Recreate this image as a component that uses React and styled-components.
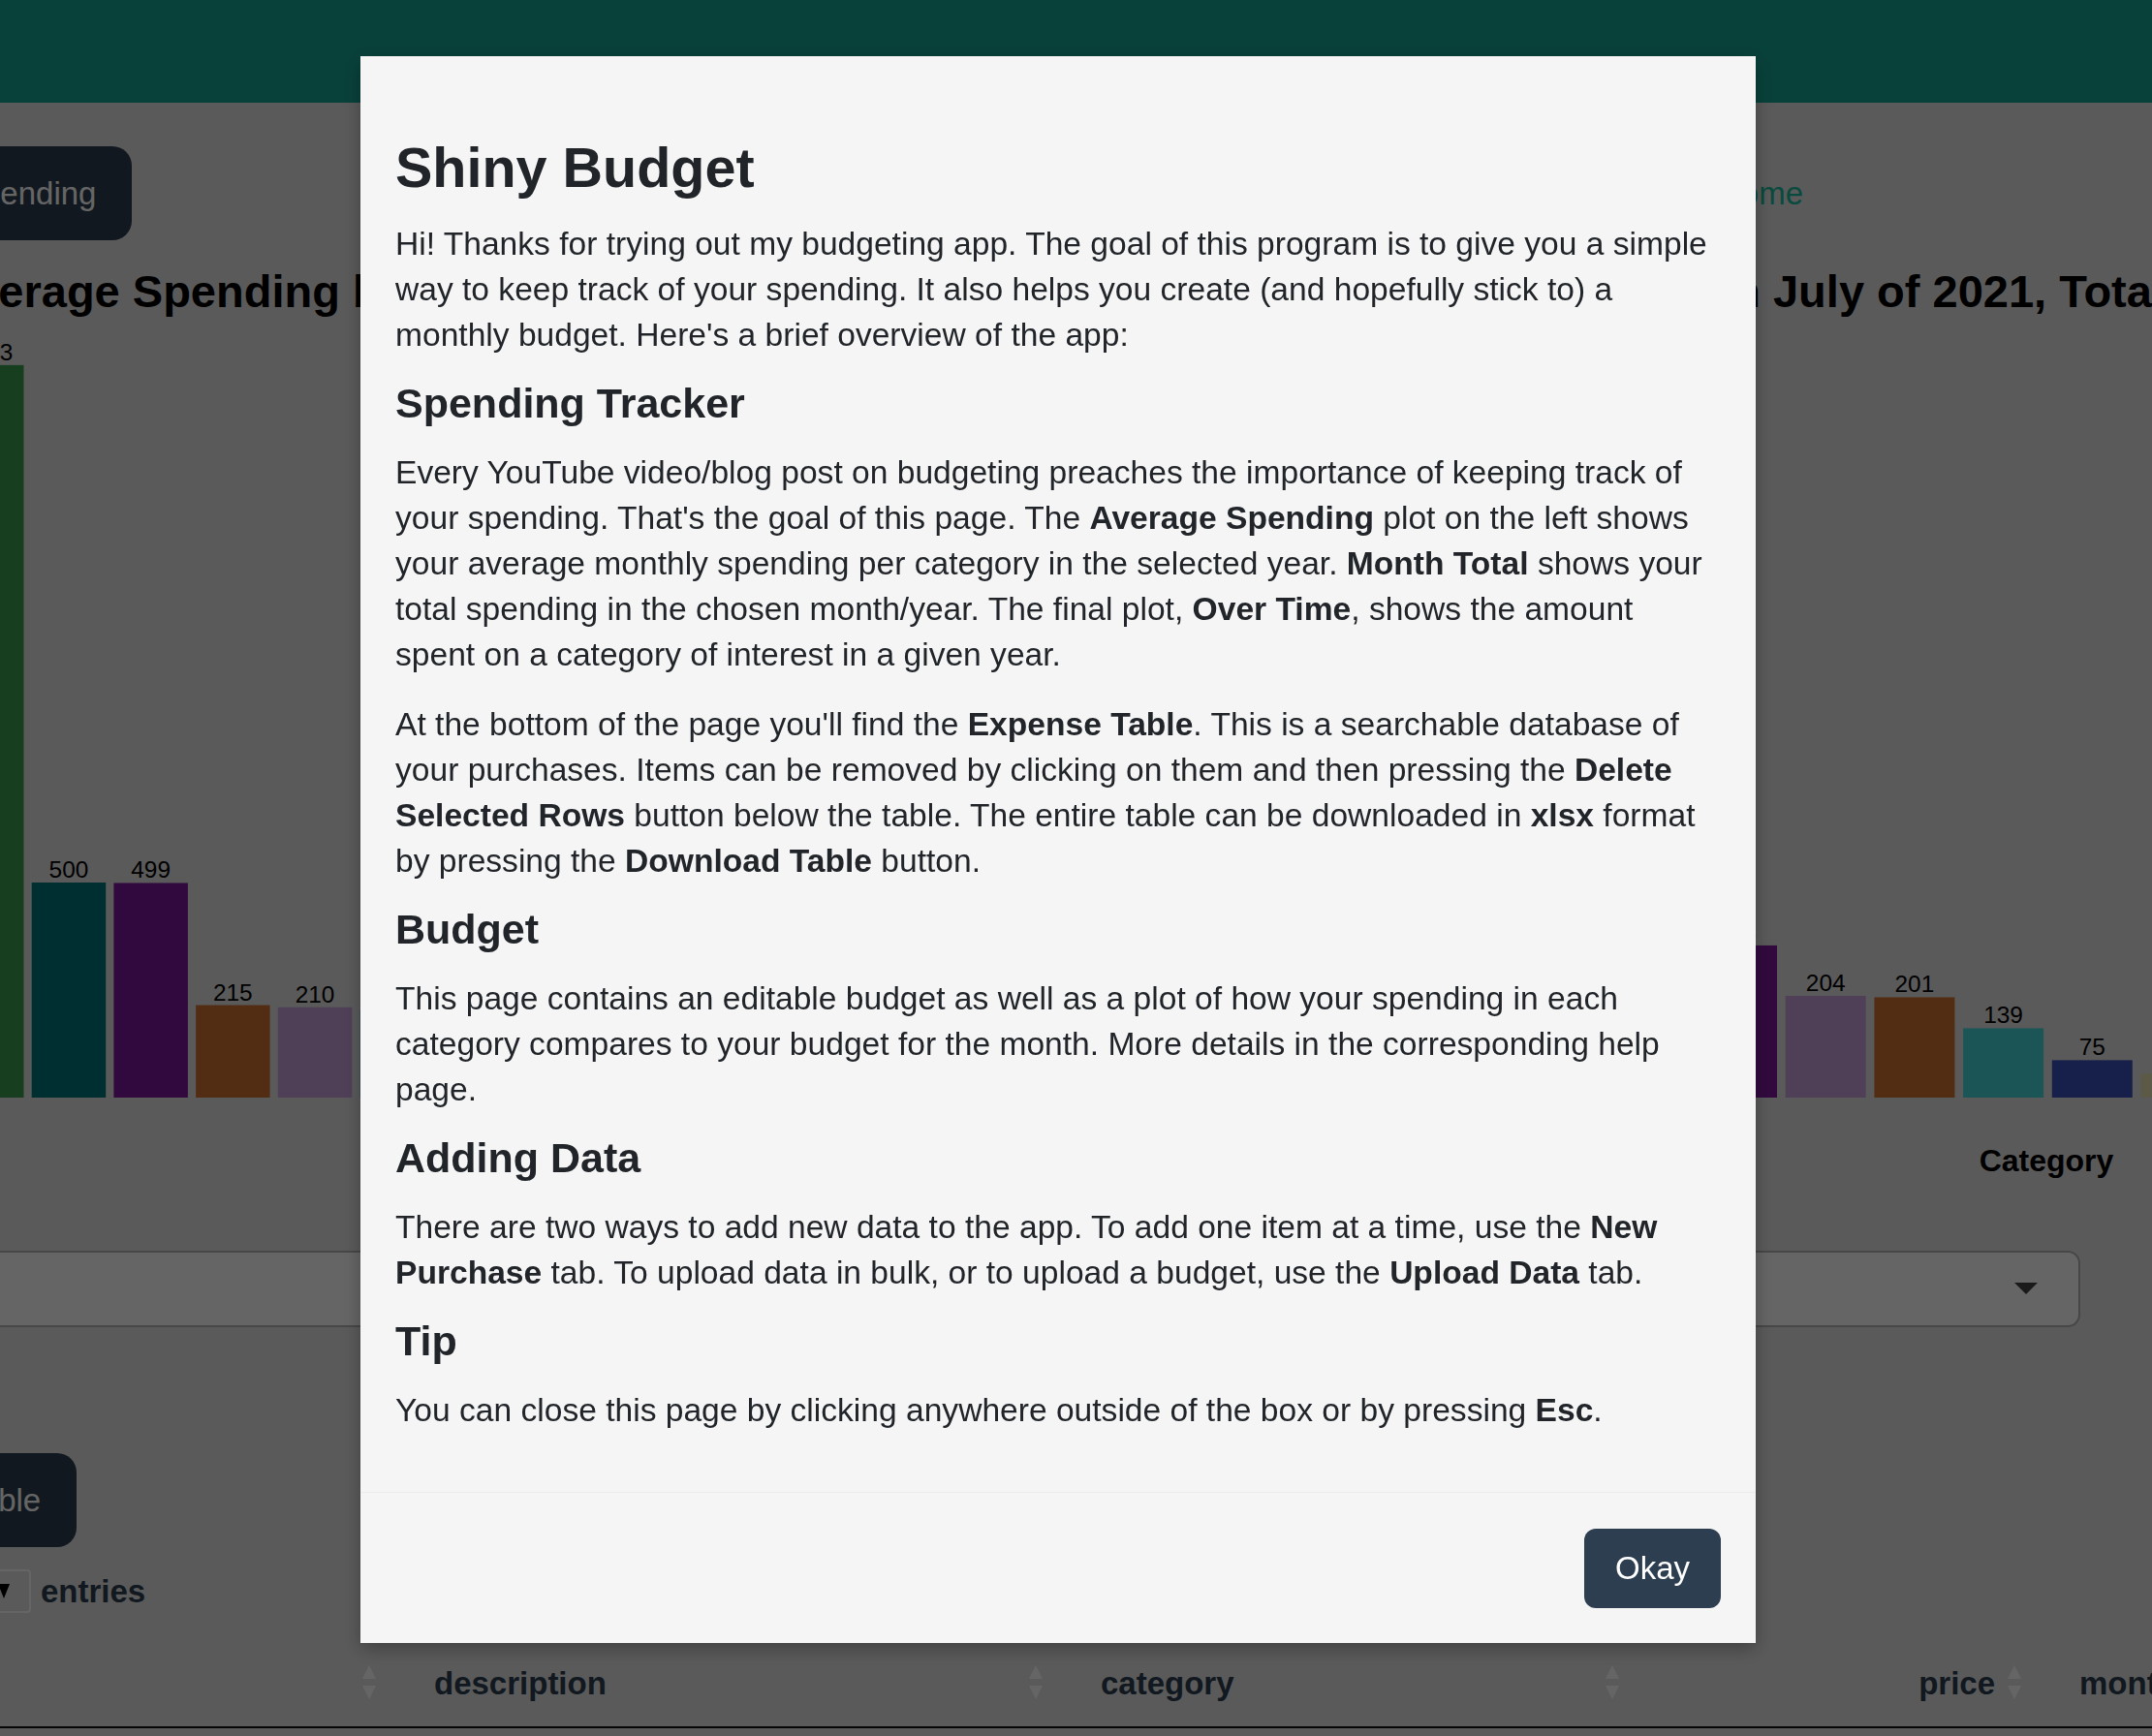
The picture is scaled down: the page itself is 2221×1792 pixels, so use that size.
import React from 'react';
import styled, { createGlobalStyle } from 'styled-components';

const GlobalStyle = createGlobalStyle`
  html,
  body {
    margin: 0;
    padding: 0;
    overflow: hidden;
    background: #e3e3e3;
  }

  body {
    font-family: "Liberation Sans", Arial, sans-serif;
  }
`;

const Page = styled.div`
  width: 3000px;
  margin-left: -240px;
  color: #2c3e50;
  font-size: 33px;
  line-height: 1.5;
`;

const Navbar = styled.header`
  height: 106px;
  background-color: #16a493;
`;

const Tabs = styled.nav`
  display: flex;
  align-items: center;
  justify-content: space-between;
  width: 1975px;
  margin-top: 45px;
  margin-left: 163px;
`;

const Tab = styled.a`
  display: block;
  padding: 25px 37px;
  border-radius: 20px;
  line-height: 47px;
  white-space: nowrap;
  color: ${(p) => (p.$active ? '#fff' : '#18bc9c')};
  background-color: ${(p) => (p.$active ? '#2c3e50' : 'transparent')};
`;

const PlotRow = styled.section`
  display: grid;
  grid-template-columns: 1608px 1128px;
  padding-left: 180px;
`;

const PlotColumn = styled.div`
  display: flex;
  flex-direction: column;
`;

const PlotTitle = styled.h2`
  margin: 25px 0 0;
  font-size: 47px;
  line-height: 1.2;
  font-weight: 700;
  color: #000;
  white-space: nowrap;
`;

const ChartSvg = styled.svg`
  display: block;
  font-family: "Liberation Sans", Arial, sans-serif;
`;

const AxisTitle = styled.div`
  text-align: center;
  font-size: 32px;
  line-height: 1.2;
  font-weight: 700;
  color: #000;
`;

const SelectRow = styled.section`
  display: grid;
  grid-template-columns: 1608px 1128px;
  padding-left: 180px;
  margin-top: 73px;
`;

const SelectBox = styled.div`
  box-sizing: border-box;
  display: flex;
  align-items: center;
  justify-content: flex-end;
  width: ${(p) => p.$width}px;
  height: 79px;
  padding-right: 42px;
  border: 2px solid #b3b3b3;
  border-radius: 13px;
  background-color: #fff;
`;

const Caret = styled.span`
  width: 0;
  height: 0;
  border-left: 12px solid transparent;
  border-right: 12px solid transparent;
  border-top: 12px solid #424242;
`;

const ActionRow = styled.div`
  display: flex;
  margin-top: 130px;
  padding-left: 11px;
`;

const PillButton = styled.button`
  padding: 25px 37px;
  border: 0;
  border-radius: 20px;
  font-family: inherit;
  font-size: 33px;
  line-height: 47px;
  color: #fff;
  background-color: #2c3e50;
  white-space: nowrap;
`;

const EntriesRow = styled.div`
  display: flex;
  align-items: center;
  gap: 10px;
  margin-top: 23px;
  padding-left: 84px;
  font-size: 33px;
  line-height: 45px;
  font-weight: 700;
`;

const LengthSelect = styled.div`
  box-sizing: border-box;
  display: flex;
  align-items: center;
  justify-content: space-between;
  width: 90px;
  height: 45px;
  padding: 0 20px 0 12px;
  border: 2px solid #fff;
  border-radius: 4px;
  font-weight: 400;
  font-size: 26px;
`;

const SmallCaret = styled.span`
  width: 0;
  height: 0;
  border-left: 6px solid transparent;
  border-right: 6px solid transparent;
  border-top: 15px solid #000;
`;

const TableHead = styled.div`
  display: grid;
  grid-template-columns: 487px 688px 595px 415px 375px;
  margin-top: 28px;
  padding-left: 180px;
`;

const HeadCell = styled.div`
  display: flex;
  align-items: center;
  justify-content: ${(p) => (p.$right ? 'flex-end' : 'flex-start')};
  gap: 13px;
  padding: 21px 39px 21px 21px;
  font-size: 33px;
  line-height: 47px;
  font-weight: 700;
  border-bottom: 2px solid #111;
  white-space: nowrap;
`;

const SortIcon = styled.svg`
  flex: none;
  margin-left: ${(p) => (p.$right ? '0' : 'auto')};
`;

const Backdrop = styled.div`
  position: fixed;
  inset: 0;
  background-color: rgba(0, 0, 0, 0.604);
  z-index: 10;
`;

const Modal = styled.div`
  position: fixed;
  top: 58px;
  left: 372px;
  width: 1440px;
  background-color: #f5f5f5;
  box-shadow: 0 6px 18px rgba(0, 0, 0, 0.3);
  color: #212529;
  z-index: 20;
`;

const ModalBody = styled.div`
  padding: 81px 36px 36px;
  font-size: 33.6px;
  line-height: 47px;
`;

const ModalTitle = styled.h2`
  margin: 0 0 20px;
  font-size: 57.5px;
  line-height: 1.2;
  font-weight: 700;
`;

const Section = styled.h3`
  margin: 0 0 26px;
  font-size: 43px;
  line-height: 44px;
  font-weight: 700;
`;

const Text = styled.p`
  margin: 0 0 25px;
`;

const ModalFooter = styled.footer`
  display: flex;
  justify-content: flex-end;
  padding: 37px 36px 36px;
  border-top: 1px solid #ececec;
`;

const OkayButton = styled.button`
  padding: 17px 32px 18px;
  border: 0;
  border-radius: 12px;
  font-family: inherit;
  font-size: 33px;
  line-height: 47px;
  color: #fff;
  background-color: #2c3e50;
`;

const leftBars = [
  { value: 1703, color: '#3a9f4e' },
  { value: 500, color: '#00777e' },
  { value: 499, color: '#7e199d' },
  { value: 215, color: '#d27230' },
  { value: 210, color: '#c7a2de' },
  { value: 204, color: '#44d7d9' },
  { value: 180, color: '#3a51bb' },
  { value: 139, color: '#e8e3b1' },
  { value: 120, color: '#3a9f4e' },
  { value: 95, color: '#00777e' },
  { value: 75, color: '#7e199d' },
  { value: 60, color: '#d27230' },
  { value: 42, color: '#c7a2de' },
  { value: 25, color: '#44d7d9' },
];

const rightBars = [
  { value: 612, color: '#3a9f4e' },
  { value: 420, color: '#00777e' },
  { value: 305, color: '#7e199d' },
  { value: 204, color: '#c7a2de' },
  { value: 201, color: '#d27230' },
  { value: 139, color: '#44d7d9' },
  { value: 75, color: '#3a51bb' },
  { value: 48, color: '#e8e3b1' },
  { value: 30, color: '#3a9f4e' },
  { value: 18, color: '#00777e' },
  { value: 9, color: '#7e199d' },
];

const BASE = 804;

function BarChart({ bars, width, offset, pitch, barWidth, scale }) {
  return (
    <ChartSvg width={width} height={850}>
      {bars.map((bar, i) => {
        const h = bar.value * scale;
        const x = offset + i * pitch;
        return (
          <g key={i}>
            <rect x={x} y={BASE - h} width={barWidth} height={h} fill={bar.color} />
            <text x={x + barWidth / 2} y={BASE - h - 5} textAnchor="middle" fontSize="24.4" fill="#000">
              {bar.value}
            </text>
          </g>
        );
      })}
    </ChartSvg>
  );
}

function Sort({ right }) {
  return (
    <SortIcon $right={right} width="14" height="36" viewBox="0 0 14 36">
      <polygon points="7,0 14,14 0,14" fill="#fff" />
      <polygon points="0,21 14,21 7,35" fill="#fff" />
    </SortIcon>
  );
}

export default function App() {
  return (
    <>
      <GlobalStyle />
      <Page>
        <Navbar />
        <Tabs>
          <Tab $active>Spending</Tab>
          <Tab>Budget</Tab>
          <Tab>New Purchase</Tab>
          <Tab>Upload Data</Tab>
          <Tab>Welcome</Tab>
        </Tabs>

        <PlotRow>
          <PlotColumn>
            <PlotTitle>Average Spending by Category in 2021</PlotTitle>
            <BarChart bars={leftBars} width={1608} offset={8} pitch={84.7} barWidth={76.5} scale={0.444} />
            <AxisTitle>Category</AxisTitle>
          </PlotColumn>
          <PlotColumn>
            <PlotTitle>Spending in July of 2021, Total: $2,061</PlotTitle>
            <BarChart bars={rightBars} width={1128} offset={19.6} pitch={91.7} barWidth={83} scale={0.515} />
            <AxisTitle>Category</AxisTitle>
          </PlotColumn>
        </PlotRow>

        <SelectRow>
          <SelectBox $width={1500}>
            <Caret />
          </SelectBox>
          <SelectBox $width={599}>
            <Caret />
          </SelectBox>
        </SelectRow>

        <ActionRow>
          <PillButton>Download Table</PillButton>
        </ActionRow>

        <EntriesRow>
          <span>Show</span>
          <LengthSelect>
            10
            <SmallCaret />
          </LengthSelect>
          <span>entries</span>
        </EntriesRow>

        <TableHead>
          <HeadCell>
            <Sort />
          </HeadCell>
          <HeadCell>
            description
            <Sort />
          </HeadCell>
          <HeadCell>
            category
            <Sort />
          </HeadCell>
          <HeadCell $right>
            price
            <Sort right />
          </HeadCell>
          <HeadCell>
            month
            <Sort />
          </HeadCell>
        </TableHead>
      </Page>

      <Backdrop />

      <Modal>
        <ModalBody>
          <ModalTitle>Shiny Budget</ModalTitle>
          <Text>
            Hi! Thanks for trying out my budgeting app. The goal of this program is to give you a simple way to keep
            track of your spending. It also helps you create (and hopefully stick to) a monthly budget. Here's a brief
            overview of the app:
          </Text>

          <Section>Spending Tracker</Section>
          <Text>
            Every YouTube video/blog post on budgeting preaches the importance of keeping track of your spending.
            That's the goal of this page. The <b>Average Spending</b> plot on the left shows your average monthly
            spending per category in the selected year. <b>Month Total</b> shows your total spending in the chosen
            month/year. The final plot, <b>Over Time</b>, shows the amount spent on a category of interest in a given
            year.
          </Text>
          <Text>
            At the bottom of the page you'll find the <b>Expense Table</b>. This is a searchable database of your
            purchases. Items can be removed by clicking on them and then pressing the <b>Delete Selected Rows</b> button
            below the table. The entire table can be downloaded in <b>xlsx</b> format by pressing the{' '}
            <b>Download Table</b> button.
          </Text>

          <Section>Budget</Section>
          <Text>
            This page contains an editable budget as well as a plot of how your spending in each category compares to
            your budget for the month. More details in the corresponding help page.
          </Text>

          <Section>Adding Data</Section>
          <Text>
            There are two ways to add new data to the app. To add one item at a time, use the <b>New Purchase</b> tab.
            To upload data in bulk, or to upload a budget, use the <b>Upload Data</b> tab.
          </Text>

          <Section>Tip</Section>
          <Text>
            You can close this page by clicking anywhere outside of the box or by pressing <b>Esc</b>.
          </Text>
        </ModalBody>
        <ModalFooter>
          <OkayButton>Okay</OkayButton>
        </ModalFooter>
      </Modal>
    </>
  );
}
